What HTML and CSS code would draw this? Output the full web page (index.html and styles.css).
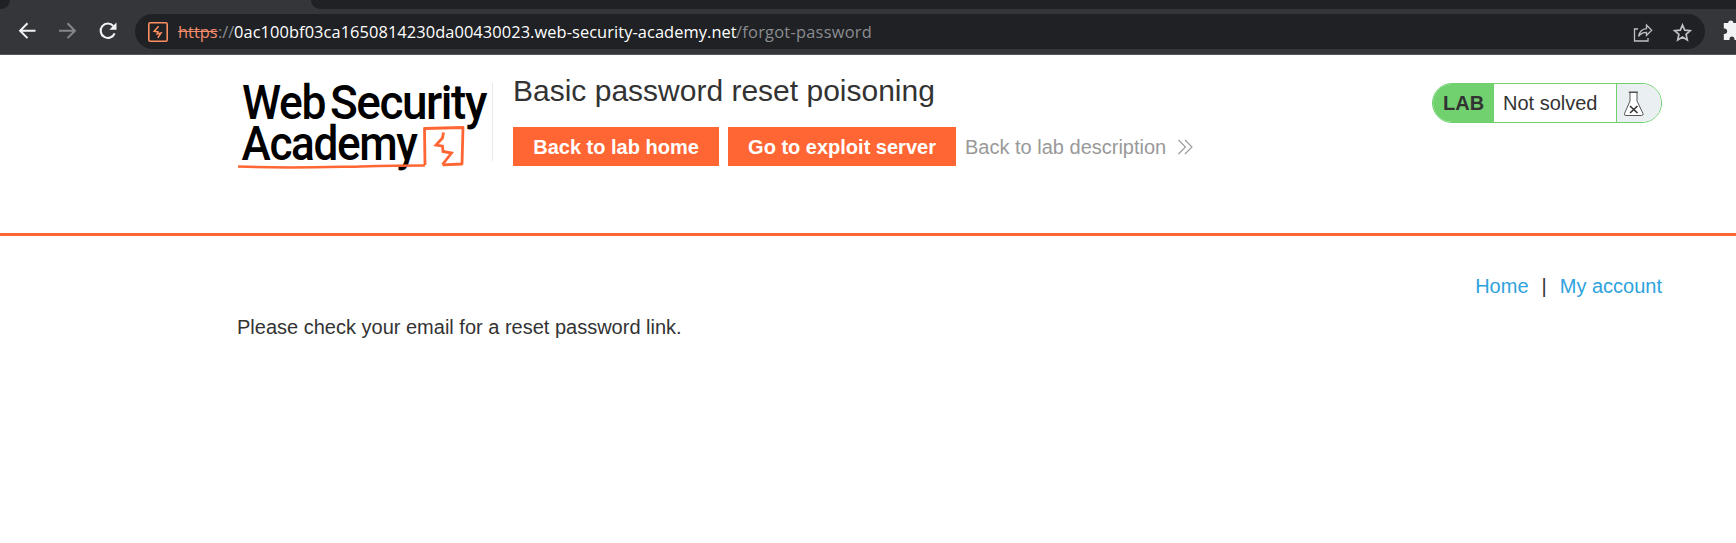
FILE: index.html
```html
<!DOCTYPE html>
<html lang="en">
<head>
<meta charset="utf-8">
<title>Basic password reset poisoning</title>
<link rel="stylesheet" href="styles.css">
</head>
<body>
<div class="browser">
  <div class="tabs">
    <div class="tab-prev"></div>
    <div class="tab-active"></div>
    <div class="tab-rest"></div>
  </div>
  <div class="toolbar">
    <svg class="nav-icons" width="135" height="46" viewBox="0 9 135 46" fill="none">
      <path d="M35.500 30.700H20.500M27.500 23.300L20.100 30.700L27.500 38.100" stroke="#f1f3f4" stroke-width="2"/>
      <path d="M59 30.700H74.500M67.500 23.300L74.900 30.700L67.500 38.100" stroke="#85868a" stroke-width="2"/>
      <path d="M113.300 26A7.200 7.200 0 1 0 114.600 33.300" stroke="#f1f3f4" stroke-width="2.100"/>
      <path d="M116.500 22.500V29.700H109.300Z" fill="#f1f3f4"/>
    </svg>
    <div class="omnibox">
      <svg class="site-icon" width="20" height="20" viewBox="0 0 20 20" fill="none" stroke="#ff8d5f">
        <rect x="0.800" y="0.800" width="18.400" height="18.400" rx="1.500" stroke-width="1.600"/>
        <path d="M10.600 4.300L6.200 9.300L10 9.900L9.200 12L13 11L9.800 15.800" stroke-width="1.500"/>
      </svg>
      <div class="url"><span class="scheme">https</span><span class="sep">://</span><span class="host">0ac100bf03ca1650814230da00430023.web-security-academy.net</span><span class="path">/forgot-password</span></div>
      <svg class="box-icons" width="60" height="24" viewBox="1632 19 60 24" fill="none" stroke="#bdc1c6" stroke-width="1.300">
        <path d="M1638 28H1634.500V40H1648V37"/>
        <path d="M1638.500 35.500C1639.500 30.500 1642 28 1646.500 27.700V24L1651.700 29.300L1646.500 34.500V31.300C1643 31.300 1640.500 32.500 1638.500 35.500Z"/>
        <path d="M1682.500 24L1684.700 29.200L1690.300 29.700L1686.100 33.400L1687.300 38.900L1682.500 36L1677.700 38.900L1678.900 33.400L1674.700 29.700L1680.300 29.200Z" stroke-width="1.700"/>
      </svg>
    </div>
    <svg class="puzzle" width="14" height="24" viewBox="0 0 14 24"><path d="M1 5H5.200A2.600 2.600 0 0 1 10.400 5H20V22H11.500V21A2.500 2.500 0 0 0 6.500 21V22H0.800V16H2A2.800 2.800 0 0 0 2 10.500H0.800V5Z" fill="#f1f3f4"/></svg>
  </div>
</div>

<header class="lab-header">
  <div class="container head-row">
    <svg class="logo" width="255" height="112" viewBox="237 68 255 112">
      <g class="logo-text">
        <text x="242" y="119" textLength="83" lengthAdjust="spacingAndGlyphs">Web</text>
        <text x="330" y="119" textLength="156" lengthAdjust="spacingAndGlyphs">Security</text>
        <text x="241.500" y="160" textLength="175" lengthAdjust="spacingAndGlyphs">Academy</text>
      </g>
      <g fill="none" stroke="#ff6633">
        <path d="M425 165L424.500 128.500L463 127.500L462 164L442.500 164.800" stroke-width="2.800" stroke-linejoin="round"/>
        <path d="M238 166.500C275 168 310 167.500 342 166.800S390 165.500 425 165.500" stroke-width="2.500"/>
        <path d="M443.500 132.500L442.500 138L436 145L442.500 146.200L443 151.500L451.500 153L442.500 164.500" stroke-width="2.800"/>
      </g>
    </svg>
    <div class="title-box">
      <h2>Basic password reset poisoning</h2>
      <div class="actions">
        <a class="button home">Back to lab home</a>
        <a class="button exploit">Go to exploit server</a>
        <a class="back">Back to lab description
          <svg width="15" height="16" viewBox="0 0 15 16" fill="none" stroke="#999" stroke-width="1.100"><path d="M0.500 1L7.500 8L0.500 15M7 1L14 8L7 15"/></svg>
        </a>
      </div>
    </div>
    <div class="status">
      <strong>LAB</strong>
      <span class="state">Not solved</span>
      <span class="flask"><svg width="22" height="26" viewBox="0 0 22 26">
        <path d="M7 1.500V10L1.500 22.500Q1 24.500 3 24.500H18.500Q20.500 24.500 20 22.500L14 10V1.500Z" fill="#fff" stroke="#555" stroke-width="1"/>
        <path d="M5.800 1.200H14.800" stroke="#555" stroke-width="1.500"/>
        <path d="M7 15L14.500 22M14.500 15L7 22" stroke="#333" stroke-width="1.600"/>
      </svg></span>
    </div>
  </div>
</header>

<main class="container">
  <nav><a>Home</a><span class="bar">|</span><a>My account</a></nav>
  <p>Please check your email for a reset password link.</p>
</main>
</body>
</html>
```

FILE: styles.css
```css
* { box-sizing: border-box; }
body {
  margin: 0;
  background: #fff;
  color: #333;
  font: 20px/25px "Liberation Sans", Arial, sans-serif;
  overflow: hidden;
}
.browser { height: 55px; background: #35363a; border-bottom: 1px solid #55565a; }
.tabs { display: flex; height: 9px; }
.tab-prev { width: 10px; background: #202124; border-bottom-right-radius: 9px; }
.tab-active { width: 301px; }
.tab-rest { flex: 1; background: #202124; border-bottom-left-radius: 9px; }
.toolbar { display: flex; height: 45px; }
.nav-icons { flex: none; }
.omnibox {
  display: flex;
  align-items: center;
  flex: none;
  width: 1570px;
  height: 35px;
  margin-top: 5px;
  padding: 0 13px;
  border-radius: 18px;
  background: #202124;
}
.site-icon { flex: none; }
.url {
  display: flex;
  margin-left: 10px;
  font: 16.400px/24px "Open Sans", "Noto Sans", sans-serif;
  white-space: pre;
}
.url span { flex: none; }
.scheme { width: 40px; color: #f28b6b; text-decoration: line-through; }
.sep { width: 16px; color: #8a8d91; }
.host { width: 502px; color: #fff; letter-spacing: 0.080px; }
.path { color: #8a8d91; letter-spacing: 0.250px; }
.box-icons { margin-left: auto; }
.puzzle { flex: none; margin: 9px 0 0 18px; }

.container { width: 1425px; margin-left: 237px; }
.lab-header { height: 181px; border-bottom: 3px solid #ff6633; }
.browser + .lab-header { height: 181px; }
.head-row { display: flex; align-items: flex-start; padding-top: 13px; }
.logo { flex: none; }
.logo-text {
  font: 500 48px Roboto, sans-serif;
  letter-spacing: -1.500px;
  fill: #000;
}
.title-box { height: 78px; margin-top: 15px; padding-left: 20px; border-left: 1px solid #e8e8e8; }
h2 { margin: -9px 0 0; font-size: 30px; font-weight: 400; line-height: 34px; }
.actions { display: flex; margin-top: 19px; gap: 9px; white-space: nowrap; }
.button {
  height: 39px;
  color: #fff;
  background: #ff6633;
  font-weight: 700;
  line-height: 40px;
  text-align: center;
}
.home { width: 206px; }
.exploit { width: 228px; }
.back { display: flex; align-items: center; gap: 12px; padding-top: 1px; color: #999; }
.status {
  display: flex;
  width: 230px;
  height: 40px;
  margin: 15px 0 0 auto;
  border: 1px solid #70d16e;
  border-radius: 20px;
  overflow: hidden;
  line-height: 38px;
}
.status strong { width: 61px; padding-left: 10px; background: #70d16e; }
.state { width: 123px; padding-left: 9px; border-right: 1px solid #70d16e; }
.flask { flex: 1; padding: 7px 0 0 6px; background: #eaeff2; line-height: 0; }
nav { display: flex; justify-content: flex-end; padding-top: 38px; color: #2ea3dd; }
.bar { margin: 0 13px; color: #333; }
p { margin: 16px 0 0; }
```
